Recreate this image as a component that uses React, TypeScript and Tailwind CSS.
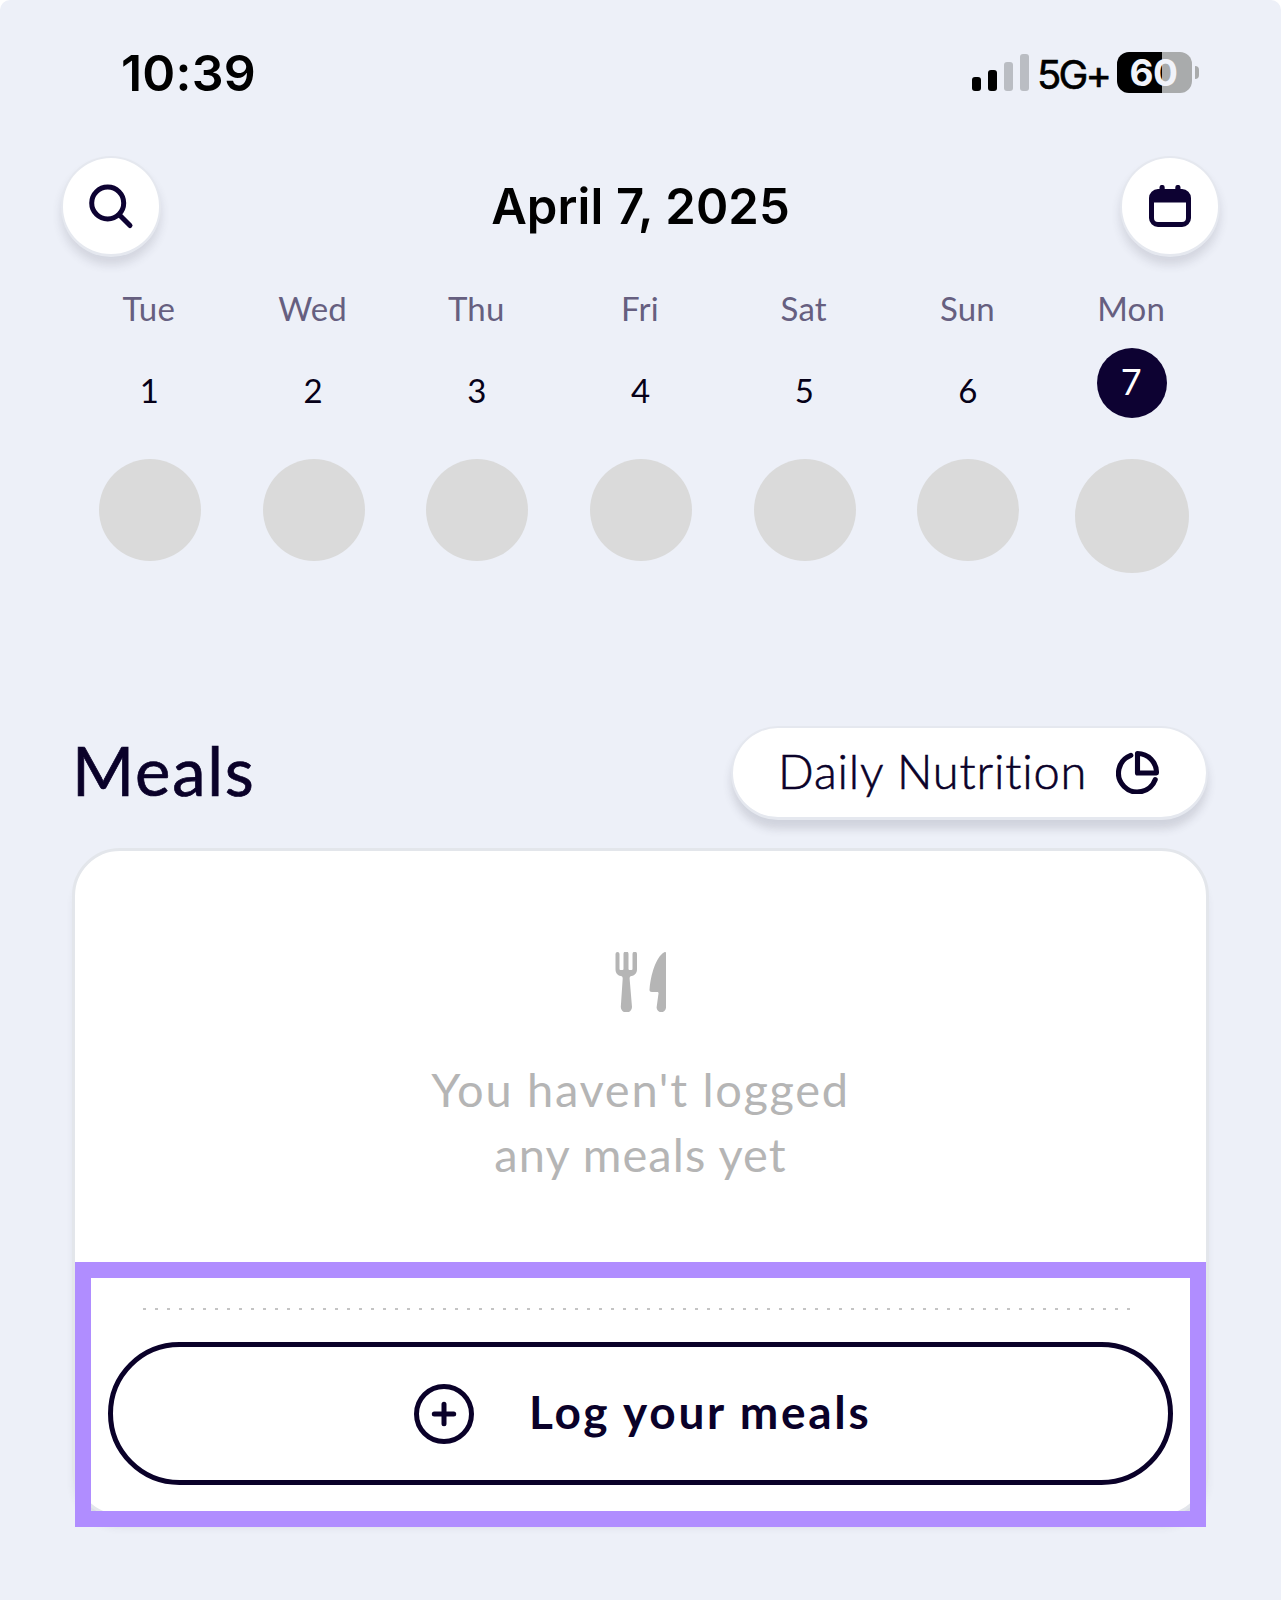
import clsx from "clsx";

const days = [
  { name: "Tue", date: 1 },
  { name: "Wed", date: 2 },
  { name: "Thu", date: 3 },
  { name: "Fri", date: 4 },
  { name: "Sat", date: 5 },
  { name: "Sun", date: 6 },
  { name: "Mon", date: 7, selected: true },
];

function StatusBar() {
  return (
    <div className="flex h-[144px] items-center justify-between pt-px pr-[82px] pl-[121px] font-['Inter',sans-serif] text-black">
      <span className="text-[50px] leading-none font-semibold tracking-[0.2px]">
        10:39
      </span>
      <div className="flex items-center">
        <div className="flex h-[37px] items-end gap-[6.5px]">
          <span className="h-[14px] w-[9.5px] rounded-[3px] bg-black" />
          <span className="h-[21px] w-[9.5px] rounded-[3px] bg-black" />
          <span className="h-[29px] w-[9.5px] rounded-[3px] bg-[#babdc3]" />
          <span className="h-[37px] w-[9.5px] rounded-[3px] bg-[#babdc3]" />
        </div>
        <span className="mt-1 ml-[8px] w-[80px] text-[40px] leading-none font-normal tracking-[-2.8px] [-webkit-text-stroke:0.6px_black]">
          5G+
        </span>
        <div className="flex h-[41px] w-[75px] items-center justify-center rounded-[12px] bg-[linear-gradient(90deg,#000_0_60%,#a9abac_60%)]">
          <span className="pr-0.5 text-[37px] leading-none font-bold tracking-[-0.5px] text-[#f1f3fa]">
            60
          </span>
        </div>
        <span className="ml-[3px] h-[13px] w-[4px] rounded-r-full bg-[#a9abac]" />
      </div>
    </div>
  );
}

function RoundButton({ children }: { children: React.ReactNode }) {
  return (
    <button className="flex h-[101px] w-[100px] items-center justify-center rounded-full border-2 border-b-[3px] border-[#e5e8ef] bg-white shadow-[0_8px_10px_rgba(60,60,80,0.14)]">
      {children}
    </button>
  );
}

function Header() {
  return (
    <div className="flex h-[124px] items-center justify-between px-[61px] pt-px">
      <RoundButton>
        <svg className="size-[48px]" viewBox="0 0 48 48" fill="none" stroke="#0d0232">
          <circle cx="20.7" cy="21" r="16" strokeWidth="5" />
          <path d="M32.500 33 L43 43.500" strokeWidth="5" strokeLinecap="round" />
        </svg>
      </RoundButton>
      <h1 className="font-['Inter',sans-serif] text-[49px] leading-none font-semibold tracking-[0.1px] text-black">
        April 7, 2025
      </h1>
      <RoundButton>
        <svg className="size-[42px]" viewBox="0 0 42 42" fill="#0d0232">
          <path
            fillRule="evenodd"
            d="M9 4h1.500V2.500a2.600 2.600 0 0 1 5.200 0V4h10.600V2.500a2.600 2.600 0 0 1 5.200 0V4H33a9 9 0 0 1 9 9v20a9 9 0 0 1-9 9H9a9 9 0 0 1-9-9V13a9 9 0 0 1 9-9ZM5 17.500V33a4 4 0 0 0 4 4h24a4 4 0 0 0 4-4V17.500Z"
          />
        </svg>
      </RoundButton>
    </div>
  );
}

function Week() {
  return (
    <div className="grid grid-cols-7 pt-[20px] pr-[67px] pl-[68px]">
      {days.map((day) => (
        <div key={day.name} className="flex flex-col items-center">
          <span className="pr-0.5 text-[33px] leading-[40px] tracking-[0.2px] text-[#665f80]">
            {day.name}
          </span>
          <div
            className={clsx(
              "mt-[20px] flex size-[70px] items-center justify-center rounded-full",
              day.selected
                ? "bg-[#0d0232] pr-0.5 pb-1 text-[36px] text-white"
                : "pt-[15px] pr-px text-[33px] text-[#060118]"
            )}
          >
            {day.date}
          </div>
          <span
            className={clsx(
              "mt-[41px] rounded-full bg-[#dadada]",
              day.selected ? "size-[114px]" : "size-[102px]"
            )}
          />
        </div>
      ))}
    </div>
  );
}

function MealsCard() {
  return (
    <div className="relative -mx-px mt-[28px] flex h-[669px] flex-col items-center rounded-[48px] border-[3px] border-[#e3e6eb] bg-white shadow-[0_12px_10px_-3px_rgba(60,60,80,0.12)]">
      {/* Fork and knife */}
      <svg className="mt-[101px] h-[60px] w-[52px]" viewBox="0 0 52 60" fill="#b5b5b5">
        <path d="M0.500 2a1.800 1.800 0 0 1 4 0V17a1 1 0 0 0 1 1h2a1 1 0 0 0 1-1V2a2.200 2.200 0 0 1 5 0V17a1 1 0 0 0 1 1h2a1 1 0 0 0 1-1V2a1.800 1.800 0 0 1 4.500 0V17c0 4-2 6.500-5.500 7-1.400.4-1.900 1-1.900 2.500L17 55a5.500 5.500 0 0 1-11.200 0L7.700 26.500c0-1.500-.5-2.100-1.900-2.500C2.300 23.500.5 21 .5 17Z" />
        <path d="M51 1.500V55.500a4.700 4.700 0 0 1-9.400 0L43.500 41.500c.1-1-.4-1.500-1.400-1.500H37c-2.200 0-2.800-1-2.400-3.500C36 23 40.500 5.500 49.300.3 50.400-.2 51 .2 51 1.500Z" />
      </svg>
      <p className="mt-[45px] text-center text-[47px] leading-[65px] tracking-[1.1px] text-[#b5b5b5]">
        <span className="tracking-[1.7px]">You haven't logged</span>
        <br />
        any meals yet
      </p>

      <div className="mt-[121px] ml-[68px] h-[2px] w-[987px] self-start bg-[repeating-linear-gradient(90deg,#c4c4c4_0_3px,transparent_3px_12px)]" />

      <button className="mt-[32px] flex h-[143px] w-[1065px] shrink-0 items-center rounded-full border-[5px] border-[#0a0129] pl-[301px] text-[#0a0129]">
        <svg className="size-[60px]" viewBox="0 0 60 60" fill="none" stroke="currentColor" strokeWidth="5">
          <circle cx="30" cy="30" r="27.500" />
          <path d="M30 20.300V39.700M20.300 30H39.700" strokeLinecap="round" />
        </svg>
        <span className="ml-[55px] pb-[3px] text-[46px] leading-none font-bold tracking-[2.7px]">
          Log your meals
        </span>
      </button>

      {/* Highlight around the log button */}
      <div className="pointer-events-none absolute inset-x-0 top-[411px] h-[265px] border-[16px] border-[#b08dff]" />
    </div>
  );
}

export default function App() {
  return (
    <div className="bg-white">
      <div className="h-[1600px] w-[1281px] rounded-t-[10px] bg-[#edf0f8] font-['Lato',sans-serif]">
        <StatusBar />
        <Header />
        <Week />
        <div className="px-[73px] pt-[153px]">
          <div className="flex h-[94px] items-center justify-between">
            <h2 className="-ml-px pb-[6px] text-[67px] leading-none tracking-[1.8px] text-[#0a0129] [-webkit-text-stroke:0.7px_#0a0129]">
              Meals
            </h2>
            <button className="flex h-[94px] w-[477px] items-center justify-between rounded-full border-2 border-b-[3px] border-[#e5e8ef] bg-white pr-[47px] pl-[45px] text-[#0a0129] shadow-[0_9px_9px_rgba(60,60,80,0.16)]">
              <span className="pb-[2px] text-[47px] leading-none font-light tracking-[0.85px] [-webkit-text-stroke:0.6px_#0a0129]">
                Daily Nutrition
              </span>
              <svg className="size-[43px]" viewBox="0 0 42 42" fill="none" stroke="currentColor" strokeWidth="5" strokeLinecap="round" strokeLinejoin="round">
                <path d="M14.500 4.200A18.500 18.500 0 1 0 38.300 28" />
                <path d="M21 2.500A18.500 18.500 0 0 1 39.500 21.500H21Z" />
              </svg>
            </button>
          </div>
          <MealsCard />
        </div>
      </div>
    </div>
  );
}
